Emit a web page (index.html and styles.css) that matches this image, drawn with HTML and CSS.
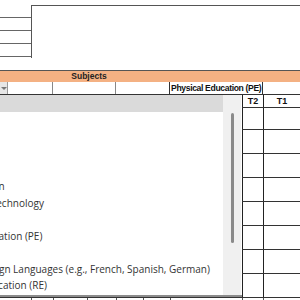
FILE: index.html
```html
<!DOCTYPE html>
<html>
<head>
<meta charset="utf-8">
<link rel="stylesheet" href="styles.css">
</head>
<body>
<div class="sheet">
  <div class="top">
    <div class="top-left">
      <div class="tl-cell c1"></div>
      <div class="tl-cell"></div>
      <div class="tl-cell"></div>
      <div class="tl-cell"></div>
    </div>
    <div class="top-right"></div>
  </div>

  <div class="band">
    <div class="band-gap"></div>
    <div class="band-title">Subjects</div>
    <div class="band-rest"></div>
  </div>

  <div class="subrow">
    <div class="filter-btn"><span class="caret"></span></div>
    <div class="sc w45"></div>
    <div class="sc w63"></div>
    <div class="sc w54"></div>
    <div class="sc pe">Physical Education (PE)</div>
    <div class="sc last"></div>
  </div>

  <div class="grid">
    <div class="hrow">
      <div class="lc"></div>
      <div class="tc t2">T2</div>
      <div class="tc t1">T1</div>
    </div>
    <div class="row r22"><div class="lc"></div><div class="tc t2"></div><div class="tc t1"></div></div>
    <div class="row"><div class="lc"></div><div class="tc t2"></div><div class="tc t1"></div></div>
    <div class="row"><div class="lc"></div><div class="tc t2"></div><div class="tc t1"></div></div>
    <div class="row"><div class="lc"></div><div class="tc t2"></div><div class="tc t1"></div></div>
    <div class="row"><div class="lc"></div><div class="tc t2"></div><div class="tc t1"></div></div>
    <div class="row"><div class="lc"></div><div class="tc t2"></div><div class="tc t1"></div></div>
    <div class="row"><div class="lc"></div><div class="tc t2"></div><div class="tc t1"></div></div>
    <div class="row"><div class="lc"></div><div class="tc t2"></div><div class="tc t1"></div></div>
    <div class="brow">
      <div class="bc w31"></div>
      <div class="bc w22"></div>
      <div class="bc w34"></div>
      <div class="bc w29"></div>
      <div class="bc w27"></div>
      <div class="bc w27"></div>
      <div class="bc w72"></div>
      <div class="bc w21"></div>
      <div class="bc"></div>
    </div>

    <div class="dropdown">
      <div class="list">
        <div class="item hl">English</div>
        <div class="item">Maths</div>
        <div class="item">Science</div>
        <div class="item">History</div>
        <div class="item">Geography</div>
        <div class="item">Art and Design</div>
        <div class="item">Design and Technology</div>
        <div class="item">Music</div>
        <div class="item">Physical Education (PE)</div>
        <div class="item">Computing</div>
        <div class="item">Modern Foreign Languages (e.g., French, Spanish, German)</div>
        <div class="item">Religious Education (RE)</div>
      </div>
      <div class="scrollbar"><div class="thumb"></div></div>
    </div>
  </div>
</div>
</body>
</html>
```

FILE: styles.css
```css
html, body {
  margin: 0;
  padding: 0;
  background: #ffffff;
}
body {
  width: 300px;
  height: 300px;
  overflow: hidden;
  font-family: "Liberation Sans", Arial, sans-serif;
}
.sheet {
  width: 300px;
}

/* top block */
.top {
  display: flex;
  margin-top: 5px;
  height: 53px;
}
.top-left {
  width: 31px;
  border-right: 1px solid #555;
  display: flex;
  flex-direction: column;
}
.tl-cell {
  height: 12px;
  border-bottom: 1px solid #666;
}
.top-right {
  flex: 1;
  border-top: 1px solid #555;
}

/* orange band */
.band {
  margin-top: 12px;
  display: flex;
  height: 11px;
  border-top: 1px solid #555;
  background: #f4b183;
}
.band-gap {
  width: 8px;
}
.band-title {
  width: 162px;
  text-align: center;
  font-weight: bold;
  font-size: 8.5px;
  line-height: 11px;
  color: #222;
}
.band-rest {
  flex: 1;
}

/* sub row */
.subrow {
  display: flex;
  height: 12px;
  border-bottom: 1px solid #333;
}
.filter-btn {
  width: 8px;
  background: #e6e6e6;
  border-right: 1px solid #999;
  box-sizing: border-box;
  display: flex;
  align-items: center;
  justify-content: center;
}
.caret {
  width: 0;
  height: 0;
  border-left: 3px solid transparent;
  border-right: 3px solid transparent;
  border-top: 3px solid #777;
}
.sc {
  box-sizing: border-box;
  border-right: 1px solid #888;
  height: 12px;
}
.w45 { width: 45px; }
.w63 { width: 63px; }
.w54 { width: 54px; border-right-color: #333; }
.sc.pe {
  width: 93px;
  border-right-color: #333;
  font-weight: bold;
  font-size: 8.6px;
  letter-spacing: -0.35px;
  line-height: 12px;
  color: #111;
  white-space: nowrap;
  padding-left: 1px;
  overflow: hidden;
}
.sc.last {
  flex: 1;
  border-right: none;
}

/* grid */
.grid {
  position: relative;
}
.hrow, .row {
  display: flex;
  border-bottom: 1px solid #333;
}
.hrow {
  height: 12px;
}
.row {
  height: 23px;
}
.row.r22 {
  height: 21px;
}
.lc {
  width: 242px;
  border-right: 1px solid #222;
}
.tc {
  box-sizing: border-box;
  font-weight: bold;
  font-size: 9px;
  line-height: 12px;
  text-align: center;
  color: #111;
}
.t2 {
  width: 21px;
  border-right: 1px solid #222;
}
.t1 {
  flex: 1;
}
.brow {
  display: flex;
  height: 10px;
}
.bc {
  box-sizing: border-box;
  border-right: 1px solid #555;
}
.bc:last-child { border-right: none; flex: 1; }
.w31 { width: 32px; }
.w22 { width: 22px; }
.w34 { width: 34px; }
.w29 { width: 29px; }
.w27 { width: 27px; }
.w72 { width: 72px; }
.w21 { width: 21px; }

/* dropdown overlay */
.dropdown {
  position: absolute;
  left: 0;
  top: 0;
  width: 242px;
  height: 202px;
  background: #ffffff;
  border-bottom: 2px solid #8c8c8c;
  box-sizing: border-box;
  display: flex;
}
.list {
  width: 223px;
  overflow: hidden;
}
.item {
  height: 16.5px;
  line-height: 16.5px;
  font-family: "Open Sans", "Noto Sans", sans-serif;
  font-size: 10px;
  color: #333;
  white-space: nowrap;
  margin-left: -64px;
}
.item.hl {
  background: #dadada;
  height: 17px;
  margin-left: 0;
  color: #dadada;
}
.scrollbar {
  width: 18px;
  background: #f0f0f0;
  display: flex;
  justify-content: center;
  padding-top: 18px;
  box-sizing: border-box;
}
.thumb {
  width: 3px;
  height: 130px;
  background: #8a8a8a;
  border-radius: 2px;
}
```
